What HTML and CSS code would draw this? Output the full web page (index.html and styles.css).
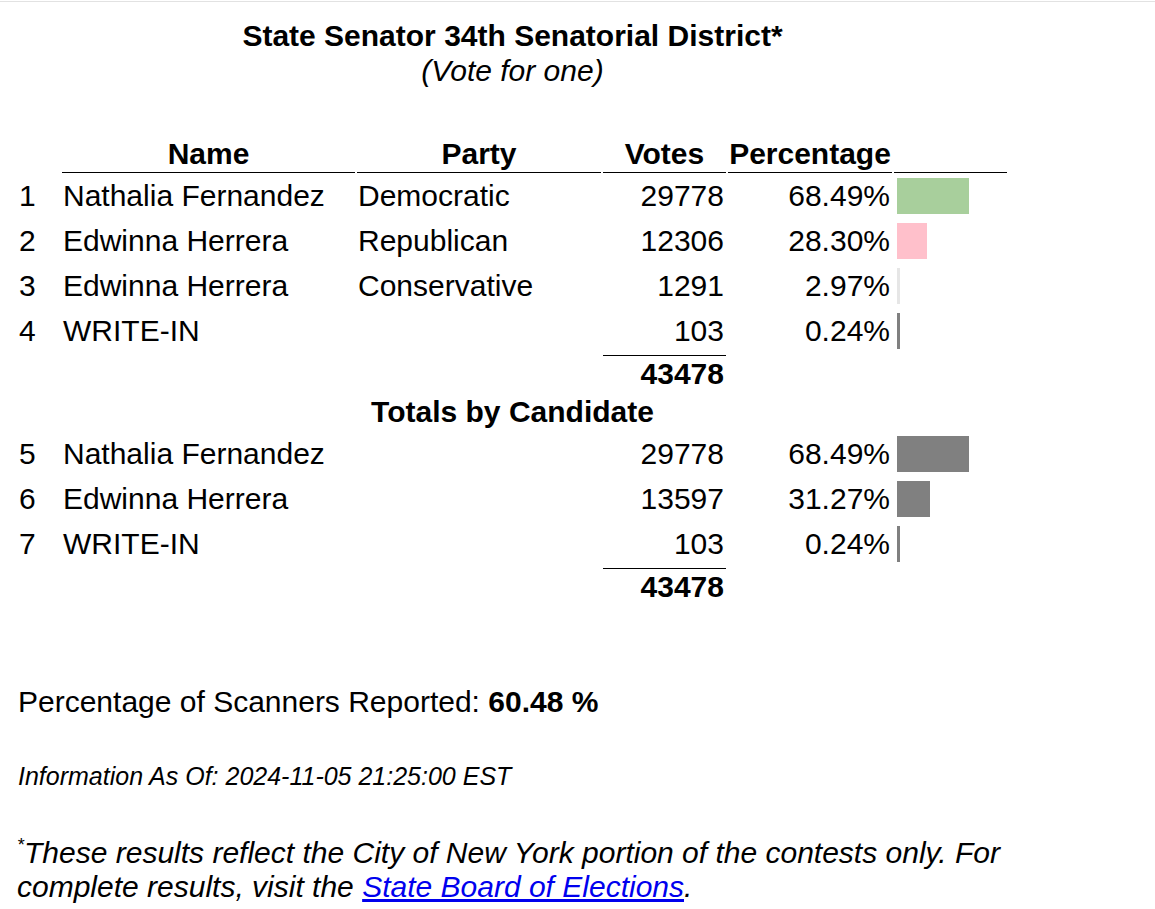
FILE: index.html
```html
<!DOCTYPE html>
<html lang="en">
<head>
<meta charset="utf-8">
<title>State Senator 34th Senatorial District</title>
<link rel="stylesheet" href="styles.css">
</head>
<body>
<div class="topline"></div>
<div class="wrap">
  <table class="results">
    <caption>
      <div class="title">State Senator 34th Senatorial District*</div>
      <div class="subtitle">(Vote for one)</div>
    </caption>
    <colgroup>
      <col class="c-num"><col class="c-name"><col class="c-party"><col class="c-votes"><col class="c-pct"><col class="c-bar">
    </colgroup>
    <thead>
      <tr>
        <th class="h-num"></th>
        <th>Name</th>
        <th>Party</th>
        <th>Votes</th>
        <th>Percentage</th>
        <th></th>
      </tr>
    </thead>
    <tbody>
      <tr class="row">
        <td class="num">1</td><td class="name">Nathalia Fernandez</td><td class="party">Democratic</td>
        <td class="votes">29778</td><td class="pct">68.49%</td>
        <td class="barcell"><div class="bar bar-dem" style="width:72px"></div></td>
      </tr>
      <tr class="row">
        <td class="num">2</td><td class="name">Edwinna Herrera</td><td class="party">Republican</td>
        <td class="votes">12306</td><td class="pct">28.30%</td>
        <td class="barcell"><div class="bar bar-rep" style="width:30px"></div></td>
      </tr>
      <tr class="row">
        <td class="num">3</td><td class="name">Edwinna Herrera</td><td class="party">Conservative</td>
        <td class="votes">1291</td><td class="pct">2.97%</td>
        <td class="barcell"><div class="bar bar-con" style="width:3px"></div></td>
      </tr>
      <tr class="row">
        <td class="num">4</td><td class="name">WRITE-IN</td><td class="party"></td>
        <td class="votes">103</td><td class="pct">0.24%</td>
        <td class="barcell"><div class="bar bar-gray" style="width:3px"></div></td>
      </tr>
      <tr class="total">
        <td></td><td></td><td></td><td class="sum">43478</td><td></td><td></td>
      </tr>
      <tr class="section">
        <td colspan="6">Totals by Candidate</td>
      </tr>
      <tr class="row">
        <td class="num">5</td><td class="name">Nathalia Fernandez</td><td class="party"></td>
        <td class="votes">29778</td><td class="pct">68.49%</td>
        <td class="barcell"><div class="bar bar-gray" style="width:72px"></div></td>
      </tr>
      <tr class="row">
        <td class="num">6</td><td class="name">Edwinna Herrera</td><td class="party"></td>
        <td class="votes">13597</td><td class="pct">31.27%</td>
        <td class="barcell"><div class="bar bar-gray" style="width:33px"></div></td>
      </tr>
      <tr class="row">
        <td class="num">7</td><td class="name">WRITE-IN</td><td class="party"></td>
        <td class="votes">103</td><td class="pct">0.24%</td>
        <td class="barcell"><div class="bar bar-gray" style="width:3px"></div></td>
      </tr>
      <tr class="total">
        <td></td><td></td><td></td><td class="sum">43478</td><td></td><td></td>
      </tr>
    </tbody>
  </table>

  <p class="scanners">Percentage of Scanners Reported: <b>60.48 %</b></p>
  <p class="asof">Information As Of: 2024-11-05 21:25:00 EST</p>
  <p class="note"><sup>*</sup>These results reflect the City of New York portion of the contests only. For complete results, visit the <a href="#">State Board of Elections</a>.</p>
</div>
</body>
</html>
```

FILE: styles.css
```css
html, body {
  margin: 0;
  padding: 0;
  background: #ffffff;
}

body {
  font-family: "Liberation Sans", Arial, sans-serif;
  font-size: 30px;
  color: #000000;
}

.topline {
  margin-top: 1px;
  height: 1px;
  background: #e2e2e2;
}

.wrap {
  margin: 16px 0 0 16px;
  width: 993px;
}

.results {
  width: 993px;
  border-collapse: separate;
  border-spacing: 2px;
  table-layout: fixed;
}

.results caption {
  padding-bottom: 47px;
  line-height: 35px;
  text-align: center;
}

.title {
  font-weight: bold;
}

.subtitle {
  font-style: italic;
}

.c-num { width: 42px; }
.c-name { width: 293px; }
.c-party { width: 244px; }
.c-votes { width: 123px; }
.c-pct { width: 164px; }
.c-bar { width: 113px; }

.results th {
  padding: 0 0 2px 0;
  line-height: 33px;
  font-weight: bold;
  text-align: center;
  border-bottom: 1px solid #000000;
}

.results th.h-num {
  border-bottom: none;
}

.results td {
  padding: 0;
  line-height: 35px;
  white-space: nowrap;
}

.row td {
  padding: 2px 0 5px 0;
  vertical-align: middle;
}

.row td.num {
  padding-left: 1px;
}

.row td.name,
.row td.party {
  padding-left: 1px;
}

.votes,
.sum {
  text-align: right;
}

.row td.votes,
.total td.sum {
  padding-right: 2px;
}

.row td.pct {
  text-align: right;
  padding-right: 2px;
}

.row td.barcell {
  padding: 3px 0 4px 3px;
}

.bar {
  height: 36px;
}

.bar-dem { background: #a8cf9c; }
.bar-rep { background: #ffc0cb; }
.bar-con { background: #e6e6e6; }
.bar-gray { background: #808080; }

.total td.sum {
  border-top: 1px solid #000000;
  font-weight: bold;
}

.section td {
  padding: 1px 0 2px 0;
  text-align: center;
  font-weight: bold;
}

.scanners {
  margin: 79px 0 0 2px;
}

.asof {
  margin: 43px 0 0 2px;
  font-size: 25px;
  font-style: italic;
}

.note {
  margin: 45px 0 0 1px;
  font-style: italic;
  line-height: 34px;
}

.note sup {
  font-size: 18px;
  line-height: 0;
  vertical-align: 12px;
}

.note a {
  color: #0000ee;
  text-decoration: underline;
}
```
